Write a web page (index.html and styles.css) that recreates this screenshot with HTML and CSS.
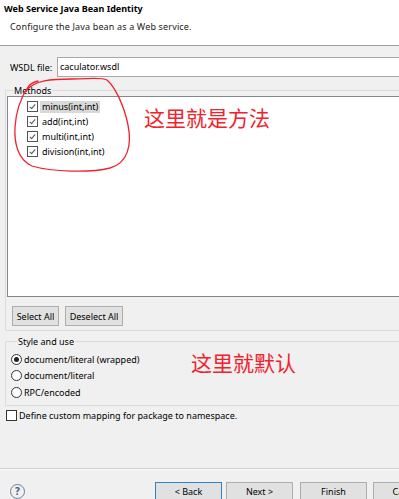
FILE: index.html
```html
<!DOCTYPE html>
<html>
<head>
<meta charset="utf-8">
<link rel="stylesheet" href="styles.css">
</head>
<body>
<div class="page">
  <div class="header">
    <div class="title">Web Service Java Bean Identity</div>
    <div class="subtitle">Configure the Java bean as a Web service.</div>
  </div>
  <div class="content">
    <div class="wsdl-row">
      <span class="wsdl-label">WSDL file:</span>
      <div class="textfield">caculator.wsdl</div>
    </div>
    <fieldset class="group methods">
      <legend>Methods</legend>
      <div class="list">
        <div class="row"><span class="cb checked"></span><span class="item sel">minus(int,int)</span></div>
        <div class="row"><span class="cb checked"></span><span class="item">add(int,int)</span></div>
        <div class="row"><span class="cb checked"></span><span class="item">multi(int,int)</span></div>
        <div class="row"><span class="cb checked"></span><span class="item">division(int,int)</span></div>
      </div>
      <div class="btn-row">
        <div class="btn sel-all">Select All</div>
        <div class="btn desel-all">Deselect All</div>
      </div>
    </fieldset>
    <fieldset class="group style">
      <legend>Style and use</legend>
      <div class="radio-row"><span class="radio on"></span>document/literal (wrapped)</div>
      <div class="radio-row"><span class="radio"></span>document/literal</div>
      <div class="radio-row"><span class="radio"></span>RPC/encoded</div>
    </fieldset>
    <div class="custom-row"><span class="cb"></span>Define custom mapping for package to namespace.</div>
  </div>
  <div class="footer">
    <div class="help">?</div>
    <div class="nav">
      <div class="btn wide default">&lt; Back</div>
      <div class="btn wide">Next &gt;</div>
      <div class="btn wide finish">Finish</div>
      <div class="btn wide">Cancel</div>
    </div>
  </div>

  <div class="note note1">这里就是方法</div>
  <div class="note note2">这里就默认</div>
  <svg class="scribble" width="130" height="100" viewBox="0 0 130 100">
    <path d="M14 14 C 22 3, 40 2, 60 2 C 78 2, 88 0, 95 3 C 103 10, 112 28, 116 48 C 120 68, 116 86, 98 91 C 78 96, 40 95, 20 89 C 6 83, 2 66, 3 50 C 4 34, 8 22, 16 10 C 18 7, 22 5, 26 4" fill="none" stroke="#f0222d" stroke-width="1.3" stroke-linecap="round"/>
  </svg>
</div>
</body>
</html>
```
FILE: styles.css
```css
html, body {
  margin: 0;
  padding: 0;
  background: #f0f0f0;
}
body {
  font-family: "Noto Sans", "Open Sans", sans-serif;
  font-size: 9px;
  color: #000;
  overflow: hidden;
}
.page {
  position: relative;
  width: 440px;
  height: 499px;
  overflow: hidden;
}
.header {
  background: #fff;
  height: 46px;
  border-bottom: 1px solid #a0a0a0;
  box-sizing: border-box;
  padding: 3px 0 0 4px;
}
.title {
  font-weight: bold;
  line-height: 12px;
}
.subtitle {
  margin: 6px 0 0 6px;
  line-height: 12px;
  color: #222;
  letter-spacing: 0.15px;
}
.content {
  padding-top: 11px;
}
.wsdl-row {
  display: flex;
  align-items: center;
  height: 20px;
}
.wsdl-label {
  margin-left: 10px;
  width: 47px;
}
.textfield {
  flex: 1;
  height: 20px;
  box-sizing: border-box;
  background: #fff;
  border: 1px solid #a8a8a8;
  padding-left: 2px;
  line-height: 18px;
}
.group {
  margin: 0 0 0 5px;
  padding: 0 0 0 1px;
  border: 1px solid #dcdcdc;
  min-width: 0;
}
.group legend {
  padding: 0 1px;
  margin-left: 6px;
  line-height: 11px;
}
.methods {
  margin-top: 8px;
  padding-bottom: 4px;
}
.list {
  background: #fff;
  border: 1px solid #828790;
  height: 201px;
  box-sizing: border-box;
  padding-top: 2px;
}
.row {
  display: flex;
  align-items: center;
  height: 15px;
  padding-left: 19px;
}
.cb {
  display: inline-block;
  width: 9px;
  height: 9px;
  border: 1px solid #555;
  background: #fff;
  position: relative;
  flex: none;
}
.cb.checked::after {
  content: "";
  position: absolute;
  left: 3px;
  top: 1px;
  width: 2px;
  height: 5px;
  border: solid #555;
  border-width: 0 1px 1px 0;
  transform: rotate(40deg);
}
.item {
  margin-left: 2px;
  padding: 0 2px;
  line-height: 12px;
}
.item.sel {
  background: #d9d9d9;
}
.btn-row {
  display: flex;
  gap: 6px;
  margin: 9px 0 0 5px;
}
.btn {
  height: 20px;
  box-sizing: border-box;
  background: #e1e1e1;
  border: 1px solid #adadad;
  display: flex;
  align-items: center;
  justify-content: center;
}
.sel-all { width: 47px; }
.desel-all { width: 58px; }
.style {
  margin-top: 5px;
  padding: 4px 0 4px 5px;
}
.radio-row {
  display: flex;
  align-items: center;
  height: 16.5px;
}
.radio {
  width: 9px;
  height: 9px;
  border: 1px solid #333;
  border-radius: 50%;
  background: #fff;
  margin-right: 2px;
  position: relative;
  flex: none;
}
.radio.on::after {
  content: "";
  position: absolute;
  left: 2px;
  top: 2px;
  width: 5px;
  height: 5px;
  border-radius: 50%;
  background: #222;
}
.custom-row {
  display: flex;
  align-items: center;
  margin: 4px 0 0 6px;
  height: 12px;
}
.custom-row .cb {
  margin-right: 2px;
  border-color: #333;
}
.footer {
  margin-top: 46px;
  border-top: 1px solid #d0d0d0;
  box-shadow: inset 0 1px 0 #fafafa;
  display: flex;
  align-items: flex-start;
  padding-top: 13px;
}
.help {
  margin: 2px 0 0 10px;
  width: 13px;
  height: 13px;
  border: 1.5px solid #6a7f95;
  border-radius: 50%;
  color: #3d5a78;
  font-weight: bold;
  font-size: 10px;
  line-height: 13px;
  text-align: center;
}
.nav {
  display: flex;
  gap: 4px;
  margin-left: 130px;
}
.btn.wide {
  width: 67px;
}
.btn.finish {
  margin-left: 3px;
  margin-right: 2px;
}
.btn.default {
  border-color: #3c7fb1;
  box-shadow: inset 0 0 0 1px #cfe4f5;
}
.note {
  position: absolute;
  color: #f0222d;
  font-family: "Noto Sans CJK SC", sans-serif;
  font-size: 21px;
  line-height: 24px;
}
.note1 { left: 144px; top: 105px; }
.note2 { left: 191px; top: 350px; }
.scribble {
  position: absolute;
  left: 12px;
  top: 77px;
}
```
